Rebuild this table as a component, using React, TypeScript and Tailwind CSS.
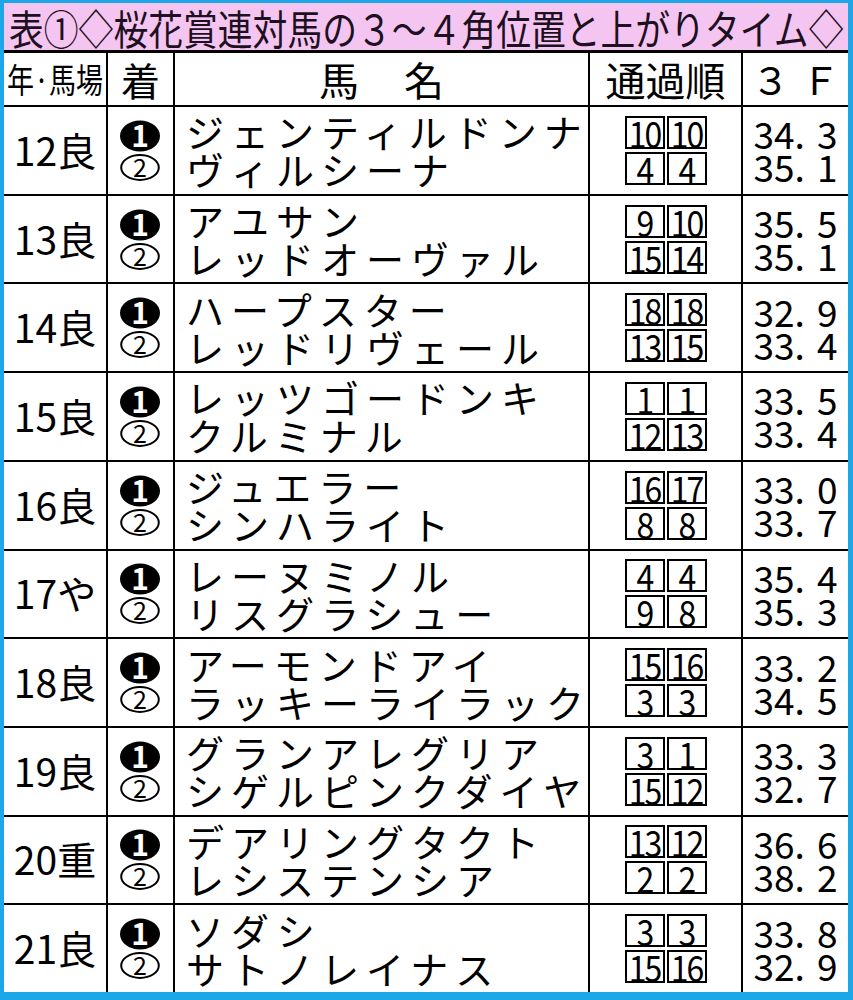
import React from 'react';

type Row = {
  year: string;
  names: [string, string];
  pos: [[number, number], [number, number]];
  f3: [string, string];
};

const rows: Row[] = [
  { year: '12良', names: ['ジェンティルドンナ', 'ヴィルシーナ'], pos: [[10, 10], [4, 4]], f3: ['34. 3', '35. 1'] },
  { year: '13良', names: ['アユサン', 'レッドオーヴァル'], pos: [[9, 10], [15, 14]], f3: ['35. 5', '35. 1'] },
  { year: '14良', names: ['ハープスター', 'レッドリヴェール'], pos: [[18, 18], [13, 15]], f3: ['32. 9', '33. 4'] },
  { year: '15良', names: ['レッツゴードンキ', 'クルミナル'], pos: [[1, 1], [12, 13]], f3: ['33. 5', '33. 4'] },
  { year: '16良', names: ['ジュエラー', 'シンハライト'], pos: [[16, 17], [8, 8]], f3: ['33. 0', '33. 7'] },
  { year: '17や', names: ['レーヌミノル', 'リスグラシュー'], pos: [[4, 4], [9, 8]], f3: ['35. 4', '35. 3'] },
  { year: '18良', names: ['アーモンドアイ', 'ラッキーライラック'], pos: [[15, 16], [3, 3]], f3: ['33. 2', '34. 5'] },
  { year: '19良', names: ['グランアレグリア', 'シゲルピンクダイヤ'], pos: [[3, 1], [15, 12]], f3: ['33. 3', '32. 7'] },
  { year: '20重', names: ['デアリングタクト', 'レシステンシア'], pos: [[13, 12], [2, 2]], f3: ['36. 6', '38. 2'] },
  { year: '21良', names: ['ソダシ', 'サトノレイナス'], pos: [[3, 3], [15, 16]], f3: ['33. 8', '32. 9'] },
];

const fam = '"Noto Sans CJK JP", "Noto Sans", sans-serif';
const font = { fontFamily: fam };

function PosBox({ n }: { n: number }) {
  return (
    <div className="w-[40px] h-[33px] shrink-0 border-2 border-black flex items-center justify-center text-[32px] leading-[29px] tracking-[-2px]">
      <span className="inline-block scale-y-[1.15]">{n}</span>
    </div>
  );
}

function Time({ t }: { t: string }) {
  const [a, b] = t.split('. ');
  return (
    <div className="h-[33px] flex items-center leading-[33px]">
      <span>{a}.</span>
      <span className="ml-[12px]">{b}</span>
    </div>
  );
}

function Place() {
  return (
    <div className="flex flex-col items-center gap-[2px] pr-[2px]">
      <svg width="42" height="32" viewBox="0 0 42 32">
        <ellipse cx="21" cy="16" rx="20" ry="15.5" fill="#000" />
        <text x="21" y="27" textAnchor="middle" fontSize="30" fontWeight="700" fill="#fff" fontFamily={fam}>
          1
        </text>
      </svg>
      <svg width="40" height="27" viewBox="0 0 40 27">
        <ellipse cx="20" cy="13.5" rx="18.8" ry="12.4" fill="none" stroke="#000" strokeWidth="2" />
        <text x="20" y="22.5" textAnchor="middle" fontSize="25" fill="#000" fontFamily={fam}>
          2
        </text>
      </svg>
    </div>
  );
}

export default function App() {
  return (
    <div className="w-[853px] h-[1000px] bg-[#1ba7e8] pt-[3px] pl-[4px] pr-[5px] pb-[8px] text-black" style={font}>
      <div className="h-full bg-white flex flex-col">
        <div className="h-[50px] shrink-0 bg-[#f5c5f1] border-b-[3px] border-black flex items-center pl-[5px]">
          <span className="inline-block whitespace-nowrap text-[34.8px] leading-[40px] text-[#1d1020] scale-y-[1.18]">
            表①◇桜花賞連対馬の３～４角位置と上がりタイム◇
          </span>
        </div>

        <div className="h-[54px] shrink-0 grid grid-cols-[104px_67px_415px_153px_105px] border-b-2 border-black">
          <div className="border-r-2 border-black flex items-center justify-center">
            <span className="inline-block whitespace-nowrap text-[27px] leading-[30px] scale-y-[1.25]">年·馬場</span>
          </div>
          <div className="border-r-2 border-black flex items-center justify-center text-[39px] leading-none">着</div>
          <div className="border-r-2 border-black flex items-center justify-center gap-[45px] text-[40px] leading-none">
            <span>馬</span>
            <span>名</span>
          </div>
          <div className="border-r-2 border-black flex items-center justify-center text-[40px] leading-none">通過順</div>
          <div className="flex items-center justify-center gap-[12px] text-[38px] leading-none">
            <span>３</span>
            <span>Ｆ</span>
          </div>
        </div>

        {rows.map((r, i) => (
          <div
            key={r.year}
            className={`flex-1 grid grid-cols-[104px_67px_415px_153px_105px] ${i < rows.length - 1 ? 'border-b-2 border-black' : ''}`}
          >
            <div className="border-r-2 border-black flex items-center justify-center text-[39px] leading-none pb-[2px]">
              {r.year}
            </div>
            <div className="border-r-2 border-black flex items-center justify-center">
              <Place />
            </div>
            <div className="border-r-2 border-black flex flex-col justify-center pl-[11px] text-[38px] leading-[38px] tracking-[7px] whitespace-nowrap">
              <div>{r.names[0]}</div>
              <div>{r.names[1]}</div>
            </div>
            <div className="border-r-2 border-black flex flex-col items-center justify-center gap-[3px]">
              {r.pos.map((p, j) => (
                <div key={j} className="flex gap-[2px]">
                  <PosBox n={p[0]} />
                  <PosBox n={p[1]} />
                </div>
              ))}
            </div>
            <div className="flex flex-col items-center justify-center text-[37px]">
              <Time t={r.f3[0]} />
              <Time t={r.f3[1]} />
            </div>
          </div>
        ))}
      </div>
    </div>
  );
}
